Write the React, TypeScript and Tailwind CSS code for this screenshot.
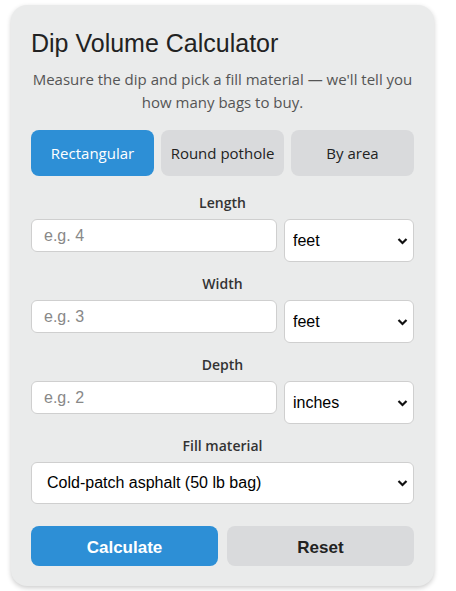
import React, { useState } from "react"

const sans = "font-['Open_Sans',sans-serif]"
const arial = "font-['Liberation_Sans',Arial,sans-serif]"

const Chevron = () => (
  <svg className="pointer-events-none absolute right-[6px] top-1/2 -translate-y-1/2" width="11" height="8" viewBox="0 0 11 8">
    <path d="M1.5 2 L5.5 6 L9.5 2" fill="none" stroke="#111" strokeWidth="2.2" />
  </svg>
)

const UnitSelect: React.FC<{ value: string; options: string[] }> = ({ value, options }) => (
  <div className="relative w-[130px] shrink-0">
    <select
      defaultValue={value}
      className={`${arial} block h-[43px] w-full appearance-none rounded-[6px] border border-[#cfcfcf] bg-white pl-[8px] text-[16px] text-black outline-none`}
    >
      {options.map((o) => (
        <option key={o}>{o}</option>
      ))}
    </select>
    <Chevron />
  </div>
)

const Field: React.FC<{ label: string; placeholder: string; unit: string; options: string[] }> = ({
  label,
  placeholder,
  unit,
  options,
}) => (
  <div className="mb-3">
    <label className={`${sans} mb-[6px] block text-center text-[14px] font-semibold leading-[20px] text-[#333]`}>{label}</label>
    <div className="flex items-start gap-[7px]">
      <input
        placeholder={placeholder}
        className={`${arial} block h-[33px] min-w-0 flex-1 rounded-[6px] border border-[#cfcfcf] bg-white px-[12px] text-[16px] text-black outline-none placeholder:text-[#888]`}
      />
      <UnitSelect value={unit} options={options} />
    </div>
  </div>
)

const App: React.FC = () => {
  const [shape, setShape] = useState("Rectangular")
  const tabs = ["Rectangular", "Round pothole", "By area"]

  return (
    <div className="min-h-screen bg-white pl-[11px] pt-[5px]">
      <div className="w-[423px] rounded-[16px] bg-[#eaebeb] px-5 pb-5 pt-6 shadow-[0_2px_5px_rgba(0,0,0,0.2)]">
        <h1 className={`${arial} text-[25px] leading-[29px] text-[#222]`}>Dip Volume Calculator</h1>
        <p className={`${sans} mt-[10px] text-center text-[15px] leading-[23px] text-[#555]`}>
          Measure the dip and pick a fill material — we'll tell you how many bags to buy.
        </p>

        <div className="mb-[17px] mt-4 grid grid-cols-3 gap-[7px]">
          {tabs.map((t) => (
            <button
              key={t}
              onClick={() => setShape(t)}
              className={`${sans} h-[46px] rounded-[8px] text-[15px] ${
                shape === t ? "bg-[#2d8fd6] text-white" : "bg-[#d9dadc] text-[#222]"
              }`}
            >
              {t}
            </button>
          ))}
        </div>

        <Field label="Length" placeholder="e.g. 4" unit="feet" options={["feet", "inches", "yards", "meters"]} />
        <Field label="Width" placeholder="e.g. 3" unit="feet" options={["feet", "inches", "yards", "meters"]} />
        <Field label="Depth" placeholder="e.g. 2" unit="inches" options={["inches", "feet", "centimeters"]} />

        <div className="mb-3">
          <label className={`${sans} mb-[6px] block text-center text-[14px] font-semibold leading-[20px] text-[#333]`}>
            Fill material
          </label>
          <div className="relative">
            <select
              defaultValue="Cold-patch asphalt (50 lb bag)"
              className={`${arial} block h-[42px] w-full appearance-none rounded-[6px] border border-[#cfcfcf] bg-white pl-[15px] text-[16px] text-black outline-none`}
            >
              <option>Cold-patch asphalt (50 lb bag)</option>
              <option>Crushed gravel (0.5 cu ft bag)</option>
              <option>Concrete mix (80 lb bag)</option>
            </select>
            <Chevron />
          </div>
        </div>

        <div className="mt-[22px] flex gap-[9px]">
          <button className={`${arial} h-[40px] flex-1 rounded-[8px] bg-[#2d8fd6] pt-[3px] text-[17px] font-bold text-white`}>
            Calculate
          </button>
          <button className={`${arial} h-[40px] flex-1 rounded-[8px] bg-[#d9dadc] pt-[3px] text-[17px] font-bold text-[#222]`}>
            Reset
          </button>
        </div>
      </div>
    </div>
  )
}

export default App
